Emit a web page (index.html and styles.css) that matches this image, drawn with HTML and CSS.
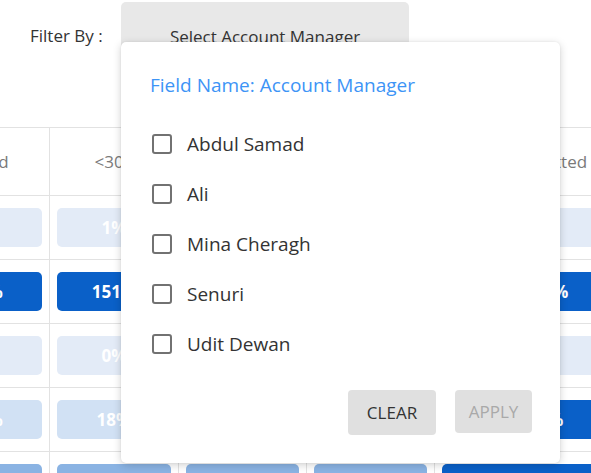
FILE: index.html
```html
<!DOCTYPE html>
<html>
<head>
<meta charset="utf-8">
<link rel="stylesheet" href="styles.css">
</head>
<body>
<div class="page">
  <div class="toolbar">
    <span class="filter-label">Filter By :</span>
    <button class="select-btn">Select Account Manager</button>
  </div>
  <div class="table-wrap">
    <div class="table">
      <div class="row head">
        <div class="cell c0">Closed</div>
        <div class="cell c1">&lt;30 Days</div>
        <div class="cell c2">30-60 Days</div>
        <div class="cell c3">&gt;60 Days</div>
        <div class="cell c4">Submitted</div>
      </div>
      <div class="row">
        <div class="cell c0"><span class="pill light">0%</span></div>
        <div class="cell c1"><span class="pill light">1%</span></div>
        <div class="cell c2"><span class="pill light">2%</span></div>
        <div class="cell c3"><span class="pill light">0%</span></div>
        <div class="cell c4"><span class="pill light">3%</span></div>
      </div>
      <div class="row">
        <div class="cell c0"><span class="pill dark">96%</span></div>
        <div class="cell c1"><span class="pill dark">151%</span></div>
        <div class="cell c2"><span class="pill dark">88%</span></div>
        <div class="cell c3"><span class="pill dark">72%</span></div>
        <div class="cell c4"><span class="pill dark">106%</span></div>
      </div>
      <div class="row">
        <div class="cell c0"><span class="pill light">0%</span></div>
        <div class="cell c1"><span class="pill light">0%</span></div>
        <div class="cell c2"><span class="pill light">0%</span></div>
        <div class="cell c3"><span class="pill light">0%</span></div>
        <div class="cell c4"><span class="pill light">0%</span></div>
      </div>
      <div class="row">
        <div class="cell c0"><span class="pill mid">16%</span></div>
        <div class="cell c1"><span class="pill mid">18%</span></div>
        <div class="cell c2"><span class="pill mid">12%</span></div>
        <div class="cell c3"><span class="pill mid">10%</span></div>
        <div class="cell c4"><span class="pill dark">96%</span></div>
      </div>
      <div class="row">
        <div class="cell c0"><span class="pill soft">45%</span></div>
        <div class="cell c1"><span class="pill soft">48%</span></div>
        <div class="cell c2"><span class="pill soft">41%</span></div>
        <div class="cell c3"><span class="pill soft">39%</span></div>
        <div class="cell c4"><span class="pill dark">88%</span></div>
      </div>
    </div>
  </div>

  <div class="popup">
    <div class="popup-title">Field Name: Account Manager</div>
    <ul class="options">
      <li class="option"><span class="box"></span><span>Abdul Samad</span></li>
      <li class="option"><span class="box"></span><span>Ali</span></li>
      <li class="option"><span class="box"></span><span>Mina Cheragh</span></li>
      <li class="option"><span class="box"></span><span>Senuri</span></li>
      <li class="option"><span class="box"></span><span>Udit Dewan</span></li>
    </ul>
    <div class="actions">
      <button class="btn btn-clear">CLEAR</button>
      <button class="btn btn-apply">APPLY</button>
    </div>
  </div>
</div>
</body>
</html>
```

FILE: styles.css
```css
* { box-sizing: border-box; }
html, body {
  margin: 0;
  padding: 0;
  background: #fff;
  font-family: "Open Sans", "Noto Sans", sans-serif;
  color: #333;
  overflow: hidden;
}
.page {
  position: relative;
  width: 591px;
  height: 473px;
  overflow: hidden;
}
.toolbar {
  display: flex;
  align-items: flex-start;
  padding-top: 2px;
  height: 127px;
}
.filter-label {
  font-size: 17px;
  line-height: 68px;
  margin-left: 30px;
  width: 91px;
  white-space: nowrap;
  color: #333;
}
.select-btn {
  width: 288px;
  height: 68px;
  border: none;
  border-radius: 5px;
  background: #e8e8e8;
  font-family: inherit;
  font-size: 17px;
  color: #333;
  padding: 0;
}
.table-wrap {
  overflow: hidden;
}
.table {
  margin-left: -79px;
  width: 800px;
  border-top: 1px solid #e2e2e2;
}
.row {
  display: flex;
  height: 64px;
  border-bottom: 1px solid #e2e2e2;
}
.row.head {
  height: 68px;
}
.cell {
  display: flex;
  align-items: center;
  padding: 0 7px;
  border-left: 1px solid #e2e2e2;
  white-space: nowrap;
}
.cell.c0 { width: 128px; border-left: none; padding-left: 8px; }
.cell.c1 { width: 129px; }
.cell.c2 { width: 128px; }
.cell.c3 { width: 128px; }
.cell.c4 { width: 223px; }
.head .cell {
  justify-content: center;
  font-size: 17px;
  color: #7a7a7a;
}
.head .cell.c0 { padding-right: 14px; }
.head .cell.c1 { padding-left: 40px; }
.pill {
  flex: 1;
  height: 39px;
  border-radius: 5px;
  display: flex;
  align-items: center;
  justify-content: center;
  font-size: 17px;
  font-weight: 700;
  color: #fff;
}
.pill.light { background: #e3ebf7; }
.pill.mid { background: #d1e1f4; }
.pill.soft { background: #8ab3e3; }
.pill.dark { background: #0a60c8; }

.popup {
  position: absolute;
  left: 121px;
  top: 42px;
  width: 439px;
  height: 421px;
  background: #fff;
  border-radius: 5px;
  box-shadow: 0 2px 8px rgba(0, 0, 0, 0.18), 0 0 2px rgba(0, 0, 0, 0.08);
  padding: 31px 28px 0 29px;
}
.popup-title {
  font-size: 19px;
  line-height: 24px;
  color: #3d94f6;
  white-space: nowrap;
}
.options {
  list-style: none;
  margin: 22px 0 0 0;
  padding: 0;
}
.option {
  height: 50px;
  display: flex;
  align-items: center;
  font-size: 19px;
  color: #333;
}
.box {
  width: 20px;
  height: 20px;
  border: 2px solid #727272;
  border-radius: 3px;
  margin-left: 2px;
  margin-right: 15px;
}
.actions {
  display: flex;
  justify-content: flex-end;
  align-items: flex-start;
  gap: 19px;
  margin-top: 21px;
}
.btn {
  border: none;
  border-radius: 4px;
  background: #e0e0e0;
  font-family: inherit;
  font-size: 17px;
  padding: 0;
}
.btn-clear {
  width: 88px;
  height: 45px;
  color: #333;
}
.btn-apply {
  width: 77px;
  height: 43px;
  color: #a9a9a9;
}
```
